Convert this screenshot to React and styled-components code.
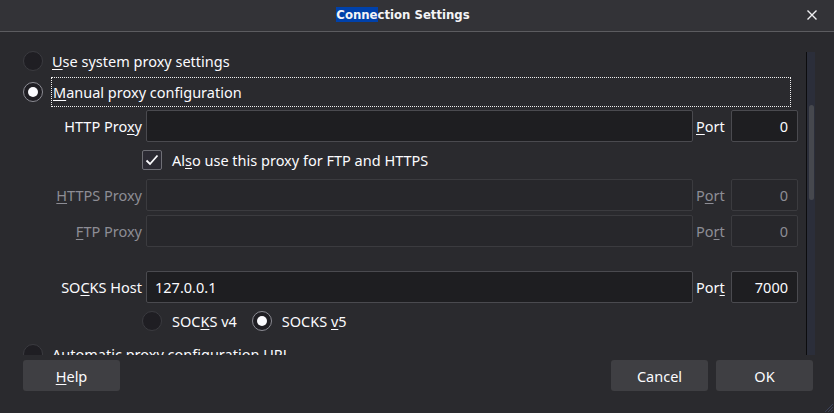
import React from "react";
import styled, { createGlobalStyle } from "styled-components";

const Global = createGlobalStyle`
  html, body { margin: 0; padding: 0; background: #2a2a2e; }
  body { font-family: "Noto Sans", "DejaVu Sans", sans-serif; font-size: 14.5px; color: #fbfbfe; }
  * { box-sizing: border-box; }
`;

const Window = styled.div`
  width: 834px;
  height: 413px;
  background: #2a2a2e;
  display: flex;
  flex-direction: column;
  position: relative;
  overflow: hidden;
`;

const TitleBar = styled.div`
  height: 32px;
  flex: 0 0 32px;
  background: #333337;
  border-bottom: 1px solid #5c5c60;
  display: flex;
  align-items: center;
  justify-content: center;
  position: relative;
`;

const Title = styled.div`
  font-family: "DejaVu Sans Condensed", "DejaVu Sans", sans-serif;
  font-weight: 600;
  font-size: 13px;
  color: #f4f4f6;
  margin-right: 28px;
  margin-top: -2px;
  line-height: 19px;
`;

const Selected = styled.span`
  background: #0041aa;
`;

const CloseButton = styled.div`
  position: absolute;
  right: 16px;
  top: 9px;
  width: 12px;
  height: 12px;
  display: flex;
`;

const Main = styled.div`
  height: 323px;
  flex: 0 0 323px;
  display: flex;
  overflow: hidden;
`;

const Content = styled.div`
  flex: 1;
  display: flex;
  flex-direction: column;
  padding: 16px 8px 0 23px;
  & > * { flex-shrink: 0; }
`;

const RadioRow = styled.label`
  display: flex;
  flex-shrink: 0;
  align-items: center;
  height: ${(p) => p.$h || 26}px;
  margin-top: ${(p) => p.$mt || 0}px;
  margin-right: ${(p) => p.$mr || 0}px;
`;

const RadioCircle = styled.span`
  width: 20px;
  height: 20px;
  flex: 0 0 20px;
  border-radius: 50%;
  background: #1f1e23;
  border: 1px solid ${(p) => (p.$checked ? "#8c8c94" : "#3b3b40")};
  display: flex;
  align-items: center;
  justify-content: center;
  &::after {
    content: "";
    display: ${(p) => (p.$checked ? "block" : "none")};
    width: 10px;
    height: 10px;
    border-radius: 50%;
    background: #fbfbfe;
  }
`;

const RadioText = styled.span`
  margin-left: ${(p) => p.$gap ?? 8}px;
  padding: 0 1px;
  line-height: 20px;
  white-space: nowrap;
  ${(p) =>
    p.$focus &&
    `
    flex: 1;
    height: 30px;
    display: flex;
    align-items: center;
    border: 1px dotted #f0f0f0;
    padding: 0 1px;
  `}
`;

const Key = styled.u`
  text-decoration: underline;
  text-underline-offset: 2px;
  text-decoration-thickness: 1px;
`;

const FieldRow = styled.div`
  display: grid;
  grid-template-columns: 97px 547px 30px 67px;
  column-gap: 4px;
  align-items: center;
  height: 32px;
  margin-top: ${(p) => p.$mt || 0}px;
  margin-left: 22px;
  color: ${(p) => (p.$disabled ? "#8d8d95" : "#fbfbfe")};
`;

const FieldLabel = styled.span`
  text-align: right;
  white-space: nowrap;
`;

const PortLabel = styled.span`
  white-space: nowrap;
  margin-left: -1px;
`;

const Input = styled.div`
  height: 32px;
  border: 1px solid ${(p) => (p.$disabled ? "#3b3b3f" : "#4a4a4f")};
  background: ${(p) => (p.$disabled ? "#27272b" : "#1e1e21")};
  border-radius: 2px;
  display: flex;
  align-items: center;
  justify-content: ${(p) => (p.$right ? "flex-end" : "flex-start")};
  padding: 0 ${(p) => (p.$right ? 9 : 8)}px;
  color: ${(p) => (p.$disabled ? "#8d8d95" : "#fbfbfe")};
`;

const CheckRow = styled.label`
  display: flex;
  align-items: center;
  height: 35px;
  margin-left: 119px;
`;

const CheckBox = styled.span`
  width: 20px;
  height: 20px;
  flex: 0 0 20px;
  border: 1px solid #6f6f76;
  background: #2b2a33;
  border-radius: 2px;
  display: flex;
  align-items: center;
  justify-content: center;
`;

const CheckText = styled.span`
  margin-left: 10px;
  white-space: nowrap;
`;

const VersionRow = styled.div`
  display: flex;
  align-items: center;
  height: 28px;
  margin-top: 4px;
  margin-left: 119px;
  gap: 14px;
`;

const ScrollTrack = styled.div`
  width: 9px;
  flex: 0 0 9px;
  margin-top: 20px;
  margin-right: 20px;
  border-left: 1px solid #0c0c0e;
  background: #2b2e3a;
  position: relative;
`;

const ScrollThumb = styled.div`
  position: absolute;
  left: 2px;
  top: 53px;
  width: 5px;
  height: 95px;
  border-radius: 3px;
  background: #46484e;
`;

const Footer = styled.div`
  display: flex;
  align-items: flex-start;
  padding: 5px 21px 0 23px;
  gap: 8px;
`;

const Button = styled.button`
  width: 97px;
  height: 31px;
  border: none;
  border-radius: 3px;
  background: #3f3f43;
  color: #fbfbfe;
  font-family: "Noto Sans", "DejaVu Sans", sans-serif;
  font-size: 14.5px;
  padding: 0;
  margin-left: ${(p) => (p.$push ? "auto" : "0")};
`;

const Grip = styled.svg`
  position: absolute;
  right: 0;
  bottom: 0;
`;

export default function App() {
  return (
    <>
      <Global />
      <Window>
        <TitleBar>
          <Title>
            <Selected>Conne</Selected>ction Settings
          </Title>
          <CloseButton>
            <svg width="12" height="12" viewBox="0 0 12 12">
              <path d="M1.5 1.5 L10.5 10.5 M10.5 1.5 L1.5 10.5" stroke="#f0f0f2" strokeWidth="1.4" />
            </svg>
          </CloseButton>
        </TitleBar>
        <Main>
          <Content>
            <RadioRow>
              <RadioCircle />
              <RadioText>
                <Key>U</Key>se system proxy settings
              </RadioText>
            </RadioRow>
            <RadioRow $h={30} $mt={3} $mr={7}>
              <RadioCircle $checked />
              <RadioText $focus $gap={8}>
                <Key>M</Key>anual proxy configuration
              </RadioText>
            </RadioRow>
            <FieldRow $mt={3}>
              <FieldLabel>
                HTTP Pro<Key>x</Key>y
              </FieldLabel>
              <Input />
              <PortLabel>
                <Key>P</Key>ort
              </PortLabel>
              <Input $right>0</Input>
            </FieldRow>
            <CheckRow>
              <CheckBox>
                <svg width="14" height="12" viewBox="0 0 14 12">
                  <path d="M1.5 6.5 L5 10 L12.5 1.5" stroke="#fbfbfe" strokeWidth="1.8" fill="none" />
                </svg>
              </CheckBox>
              <CheckText>
                Al<Key>s</Key>o use this proxy for FTP and HTTPS
              </CheckText>
            </CheckRow>
            <FieldRow $mt={2} $disabled>
              <FieldLabel>
                <Key>H</Key>TTPS Proxy
              </FieldLabel>
              <Input $disabled />
              <PortLabel>
                P<Key>o</Key>rt
              </PortLabel>
              <Input $right $disabled>0</Input>
            </FieldRow>
            <FieldRow $mt={4} $disabled>
              <FieldLabel>
                <Key>F</Key>TP Proxy
              </FieldLabel>
              <Input $disabled />
              <PortLabel>
                Po<Key>r</Key>t
              </PortLabel>
              <Input $right $disabled>0</Input>
            </FieldRow>
            <FieldRow $mt={24}>
              <FieldLabel>
                SO<Key>C</Key>KS Host
              </FieldLabel>
              <Input>127.0.0.1</Input>
              <PortLabel>
                Por<Key>t</Key>
              </PortLabel>
              <Input $right>7000</Input>
            </FieldRow>
            <VersionRow>
              <RadioRow $h={28}>
                <RadioCircle />
                <RadioText $gap={9}>
                  SOC<Key>K</Key>S v4
                </RadioText>
              </RadioRow>
              <RadioRow $h={28}>
                <RadioCircle $checked />
                <RadioText $gap={9}>
                  SOCKS <Key>v</Key>5
                </RadioText>
              </RadioRow>
            </VersionRow>
            <RadioRow $mt={6}>
              <RadioCircle />
              <RadioText>Automatic proxy configuration URL</RadioText>
            </RadioRow>
          </Content>
          <ScrollTrack>
            <ScrollThumb />
          </ScrollTrack>
        </Main>
        <Footer>
          <Button>
            <Key>H</Key>elp
          </Button>
          <Button $push>Cancel</Button>
          <Button>OK</Button>
        </Footer>
        <Grip width="12" height="12" viewBox="0 0 12 12">
          <path d="M11 3 L3 11 M11 6 L6 11 M11 9 L9 11" stroke="#3c4258" strokeWidth="1" />
        </Grip>
      </Window>
    </>
  );
}
